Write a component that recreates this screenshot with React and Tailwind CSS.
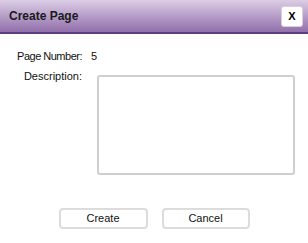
import { useState } from 'react';

const CreatePageDialog = () => {
  const [description, setDescription] = useState('');

  return (
    <div className="w-[308px] h-[243px] bg-white overflow-hidden font-['Liberation_Sans',Arial,sans-serif] text-[11px] text-[#111]">
      {/* title bar */}
      <div className="h-[34px] flex items-center justify-between pl-[9px] pr-[5px] bg-gradient-to-b from-[#dccde6] to-[#9270ab] border-b-2 border-[#5c3d7e]">
        <span className="text-[12px] font-bold text-[#1a1a1a] leading-none">Create Page</span>
        <button className="w-[22px] h-[21px] mt-[1px] flex items-center justify-center bg-white rounded-[3px] border border-[#d8d0de] text-[11px] font-bold text-black leading-none">
          X
        </button>
      </div>

      <div className="pt-[16px]">
        <div className="flex leading-[13px]">
          <span className="w-[82px] text-right tracking-[-0.5px]">Page Number:</span>
          <span className="ml-[9px]">5</span>
        </div>

        <div className="flex items-start mt-[7px] leading-[13px]">
          <span className="w-[82px] text-right">Description:</span>
          <textarea
            value={description}
            onChange={(e) => setDescription(e.target.value)}
            className="ml-[15px] mt-[5px] w-[198px] h-[100px] border-2 border-[#cfcfcf] rounded-[3px] resize-none outline-none p-1"
          />
        </div>

        <div className="flex justify-center gap-[14px] mt-[33px]">
          <button className="w-[89px] h-[21px] border-2 border-[#dcdcdc] rounded-[4px] bg-white leading-none">Create</button>
          <button className="w-[88px] h-[21px] border-2 border-[#dcdcdc] rounded-[4px] bg-white leading-none">Cancel</button>
        </div>
      </div>
    </div>
  );
};

export default function App() {
  return <CreatePageDialog />;
}
